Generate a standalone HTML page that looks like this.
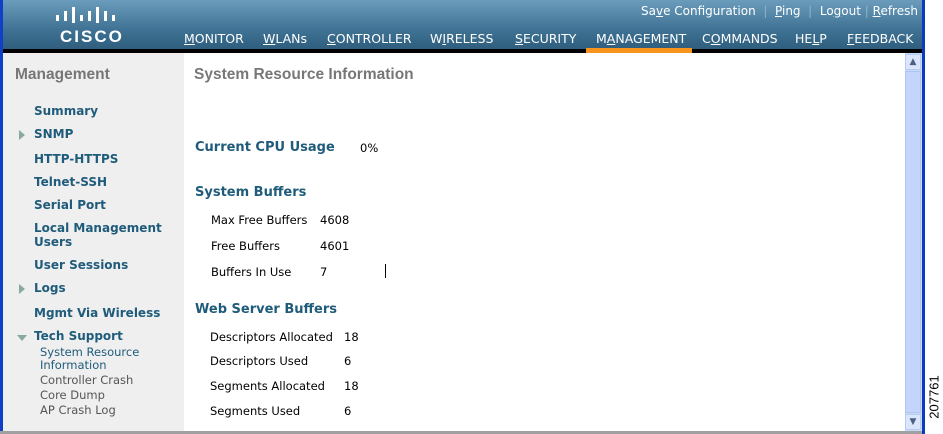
<!DOCTYPE html>
<html><head><style>
body{margin:0;width:943px;height:434px;overflow:hidden;background:#fff;font-family:"DejaVu Sans",Verdana,sans-serif;position:relative}
.a{position:absolute;white-space:nowrap}
#hdr{left:3px;top:0;width:919px;height:49px;background:linear-gradient(#6b9cbc,#3f7294 60%,#2f5e7e)}
#blk{left:3px;top:49px;width:919px;height:4px;background:#000}
#org{left:586px;top:48px;width:106px;height:5px;background:#f7941d}
#lb{left:0;top:0;width:3px;height:434px;background:#1040c8}
#rb{left:922px;top:0;width:3px;height:434px;background:#0a3cc0}
#side{left:3px;top:53px;width:181px;height:378px;background:#efefef}
#bot{left:0;top:431px;width:922px;height:3px;background:#a0a0a0}
.nav{top:31px;font-size:12.5px;color:#fff}
.tl{top:4px;font-size:12px;color:#fff}
.sb{font-weight:bold;font-size:12px;color:#1f5b7a;left:34px}
.ss{font-size:11.5px;color:#555;left:40px}
.h{font-weight:bold;font-size:13px;color:#1f5b7a;left:195px}
.t{font-size:11.5px;color:#000}
.tri{position:absolute;width:0;height:0}
</style></head><body>
<div id="lb" class="a"></div>
<div id="hdr" class="a"></div>
<div id="blk" class="a"></div>
<div id="org" class="a"></div>
<div id="rb" class="a"></div>
<div id="side" class="a"></div>
<div id="bot" class="a"></div>
<svg class="a" style="left:55px;top:7px" width="70" height="18">
<g fill="#fff"><rect x="1" y="8" width="3" height="6"/><rect x="9" y="4" width="3" height="10"/><rect x="17" y="0" width="3" height="16"/><rect x="25" y="8" width="3" height="6"/><rect x="33" y="4" width="3" height="10"/><rect x="41" y="0" width="3" height="16"/><rect x="49" y="4" width="3" height="10"/><rect x="57" y="8" width="3" height="6"/></g></svg>
<div class="a" style="left:60px;top:27px;font-weight:bold;font-size:17px;color:#fff;letter-spacing:2px;font-family:'Liberation Sans',sans-serif">CISCO</div>
<div class="a tl" style="left:641px">Sa<u>v</u>e Configuration <span style="color:#8fb3c8">&nbsp;|&nbsp;</span> <u>P</u>ing <span style="color:#8fb3c8">&nbsp;|&nbsp;</span> Lo<u>g</u>out <span style="color:#8fb3c8">|</span> <u>R</u>efresh</div>
<div class="a nav" style="left:184px"><u>M</u>ONITOR</div>
<div class="a nav" style="left:263px"><u>W</u>LANs</div>
<div class="a nav" style="left:327px"><u>C</u>ONTROLLER</div>
<div class="a nav" style="left:430px">W<u>I</u>RELESS</div>
<div class="a nav" style="left:515px"><u>S</u>ECURITY</div>
<div class="a nav" style="left:596px">M<u>A</u>NAGEMENT</div>
<div class="a nav" style="left:702px">C<u>O</u>MMANDS</div>
<div class="a nav" style="left:795px">HE<u>L</u>P</div>
<div class="a nav" style="left:847px"><u>F</u>EEDBACK</div>
<div class="a" style="left:15px;top:66px;font-size:15.5px;font-weight:bold;color:#777;font-family:'Liberation Sans',sans-serif">Management</div>
<div class="a" style="left:194px;top:66px;font-size:15.5px;font-weight:bold;color:#777;font-family:'Liberation Sans',sans-serif">System Resource Information</div>
<div class="a sb" style="top:104px">Summary</div>
<div class="tri a" style="left:19px;top:130px;border-left:6px solid #8a9;border-top:5px solid transparent;border-bottom:5px solid transparent"></div>
<div class="a sb" style="top:127px">SNMP</div>
<div class="a sb" style="top:152px">HTTP-HTTPS</div>
<div class="a sb" style="top:175px">Telnet-SSH</div>
<div class="a sb" style="top:198px">Serial Port</div>
<div class="a sb" style="top:221px;line-height:14px">Local Management<br>Users</div>
<div class="a sb" style="top:258px">User Sessions</div>
<div class="tri a" style="left:19px;top:284px;border-left:6px solid #8a9;border-top:5px solid transparent;border-bottom:5px solid transparent"></div>
<div class="a sb" style="top:281px">Logs</div>
<div class="a sb" style="top:306px">Mgmt Via Wireless</div>
<div class="tri a" style="left:17px;top:335px;border-top:6px solid #8a9;border-left:5px solid transparent;border-right:5px solid transparent"></div>
<div class="a sb" style="top:329px">Tech Support</div>
<div class="a ss" style="top:346px;line-height:13px;color:#1f5b7a">System Resource<br>Information</div>
<div class="a ss" style="top:373px">Controller Crash</div>
<div class="a ss" style="top:388px">Core Dump</div>
<div class="a ss" style="top:403px">AP Crash Log</div>
<div class="a h" style="top:140px">Current CPU Usage</div>
<div class="a t" style="left:360px;top:141px">0%</div>
<div class="a h" style="top:185px">System Buffers</div>
<div class="a t" style="left:211px;top:213px">Max Free Buffers</div><div class="a t" style="left:320px;top:213px">4608</div>
<div class="a t" style="left:211px;top:239px">Free Buffers</div><div class="a t" style="left:320px;top:239px">4601</div>
<div class="a t" style="left:211px;top:265px">Buffers In Use</div><div class="a t" style="left:320px;top:265px">7</div>
<div class="a" style="left:385px;top:264px;width:1px;height:14px;background:#000"></div>
<div class="a h" style="top:302px">Web Server Buffers</div>
<div class="a t" style="left:210px;top:330px">Descriptors Allocated</div><div class="a t" style="left:344px;top:330px">18</div>
<div class="a t" style="left:210px;top:354px">Descriptors Used</div><div class="a t" style="left:344px;top:354px">6</div>
<div class="a t" style="left:210px;top:379px">Segments Allocated</div><div class="a t" style="left:344px;top:379px">18</div>
<div class="a t" style="left:210px;top:404px">Segments Used</div><div class="a t" style="left:344px;top:404px">6</div>
<div class="a" style="left:905px;top:53px;width:17px;height:378px;background:#c8d8f8"></div>
<div class="a" style="left:905px;top:71px;width:16px;height:342px;background:#c3d5fb;border:1px solid #b0c4f0;box-sizing:border-box"></div>
<div class="a" style="left:905px;top:54px;width:16px;height:16px;background:#dbe6fd;border:1px solid #b8cbf5;box-sizing:border-box;font-size:9px;text-align:center;color:#4d6185;line-height:14px">&#9650;</div>
<div class="a" style="left:905px;top:414px;width:16px;height:16px;background:#dbe6fd;border:1px solid #b8cbf5;box-sizing:border-box;font-size:9px;text-align:center;color:#4d6185;line-height:14px">&#9660;</div>
<div class="a" style="left:934px;top:397px;transform:translate(-50%,-50%) rotate(-90deg);font-family:'Liberation Sans',sans-serif;font-size:13px;color:#000">207761</div>
</body></html>
